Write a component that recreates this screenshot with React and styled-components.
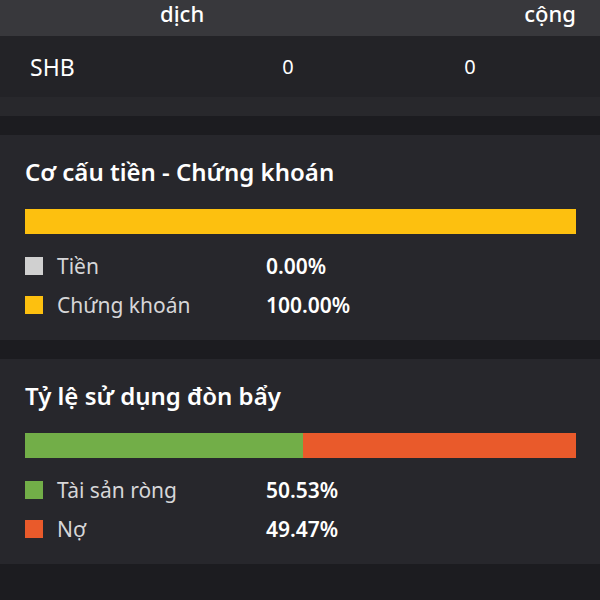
import React from 'react';
import styled, { createGlobalStyle } from 'styled-components';

const GlobalStyle = createGlobalStyle`
  html, body {
    margin: 0;
    padding: 0;
    background: #1c1c20;
    font-family: "Noto Sans", "Open Sans", sans-serif;
    color: #ffffff;
  }
`;

const Page = styled.div`
  width: 600px;
  height: 600px;
  overflow: hidden;
  background: #1c1c20;
`;

// table header, scrolled so only the bottom line of the labels shows
const HeadBand = styled.div`
  height: 36px;
  background: #38383c;
  overflow: hidden;
  display: grid;
  grid-template-columns: 1fr 1fr 1fr;
  align-items: end;
`;

const HeadCell = styled.div`
  font-size: 22px;
  line-height: 26px;
  font-weight: 500;
  margin-bottom: 15px;
  text-align: ${(p) => p.$align || 'left'};
  padding: ${(p) => p.$pad || '0'};
`;

const Row = styled.div`
  height: 61px;
  background: #232327;
  display: grid;
  grid-template-columns: 200px 176px 188px;
  align-items: center;
`;

const Cell = styled.div`
  text-align: ${(p) => p.$align || 'left'};
  padding: ${(p) => p.$pad || '0'};
  font-size: ${(p) => p.$size || '22px'};
`;

const RowFoot = styled.div`
  height: 19px;
  background: #28282c;
`;

const Stack = styled.div`
  display: flex;
  flex-direction: column;
  gap: 19px;
  padding-top: 19px;
`;

const Card = styled.section`
  background: #27272c;
  padding: 22px 24px 16px 25px;
`;

const Title = styled.h2`
  margin: 0;
  font-size: 24px;
  line-height: 30px;
  font-weight: 600;
  color: #ffffff;
`;

const Bar = styled.div`
  display: flex;
  height: 25px;
  margin-top: 22px;
  margin-bottom: 12px;
`;

const Segment = styled.div`
  background: ${(p) => p.$color};
  height: 100%;
`;

const Legend = styled.div`
  display: grid;
  grid-template-columns: 32px 209px auto;
  align-items: center;
  height: 39px;
`;

const Swatch = styled.span`
  width: 18px;
  height: 18px;
  background: ${(p) => p.$color};
`;

const Label = styled.span`
  font-size: 21px;
  color: #d6d6d8;
`;

const Value = styled.span`
  font-size: 21px;
  font-weight: 600;
  color: #ffffff;
`;

const BottomBand = styled.div`
  height: 40px;
`;

const charts = [
  {
    title: 'Cơ cấu tiền - Chứng khoán',
    items: [
      { label: 'Tiền', value: 0, color: '#d0d0d0' },
      { label: 'Chứng khoán', value: 100, color: '#fdc00f' },
    ],
  },
  {
    title: 'Tỷ lệ sử dụng đòn bẩy',
    items: [
      { label: 'Tài sản ròng', value: 50.53, color: '#72ae48' },
      { label: 'Nợ', value: 49.47, color: '#e95a2b' },
    ],
  },
];

function ChartCard({ title, items }) {
  return (
    <Card>
      <Title>{title}</Title>
      <Bar>
        {items.map((it) => (
          <Segment key={it.label} $color={it.color} style={{ width: it.value + '%' }} />
        ))}
      </Bar>
      {items.map((it) => (
        <Legend key={it.label}>
          <Swatch $color={it.color} />
          <Label>{it.label}</Label>
          <Value>{it.value.toFixed(2)}%</Value>
        </Legend>
      ))}
    </Card>
  );
}

export default function App() {
  return (
    <Page>
      <GlobalStyle />
      <HeadBand>
        <HeadCell $pad="0 0 0 160px">dịch</HeadCell>
        <HeadCell />
        <HeadCell $align="right" $pad="0 24px 0 0">cộng</HeadCell>
      </HeadBand>
      <Row>
        <Cell $pad="0 0 0 30px" $size="23px">SHB</Cell>
        <Cell $align="center" $size="20px">0</Cell>
        <Cell $align="center" $size="20px">0</Cell>
      </Row>
      <RowFoot />
      <Stack>
        {charts.map((c) => (
          <ChartCard key={c.title} {...c} />
        ))}
      </Stack>
      <BottomBand />
    </Page>
  );
}
